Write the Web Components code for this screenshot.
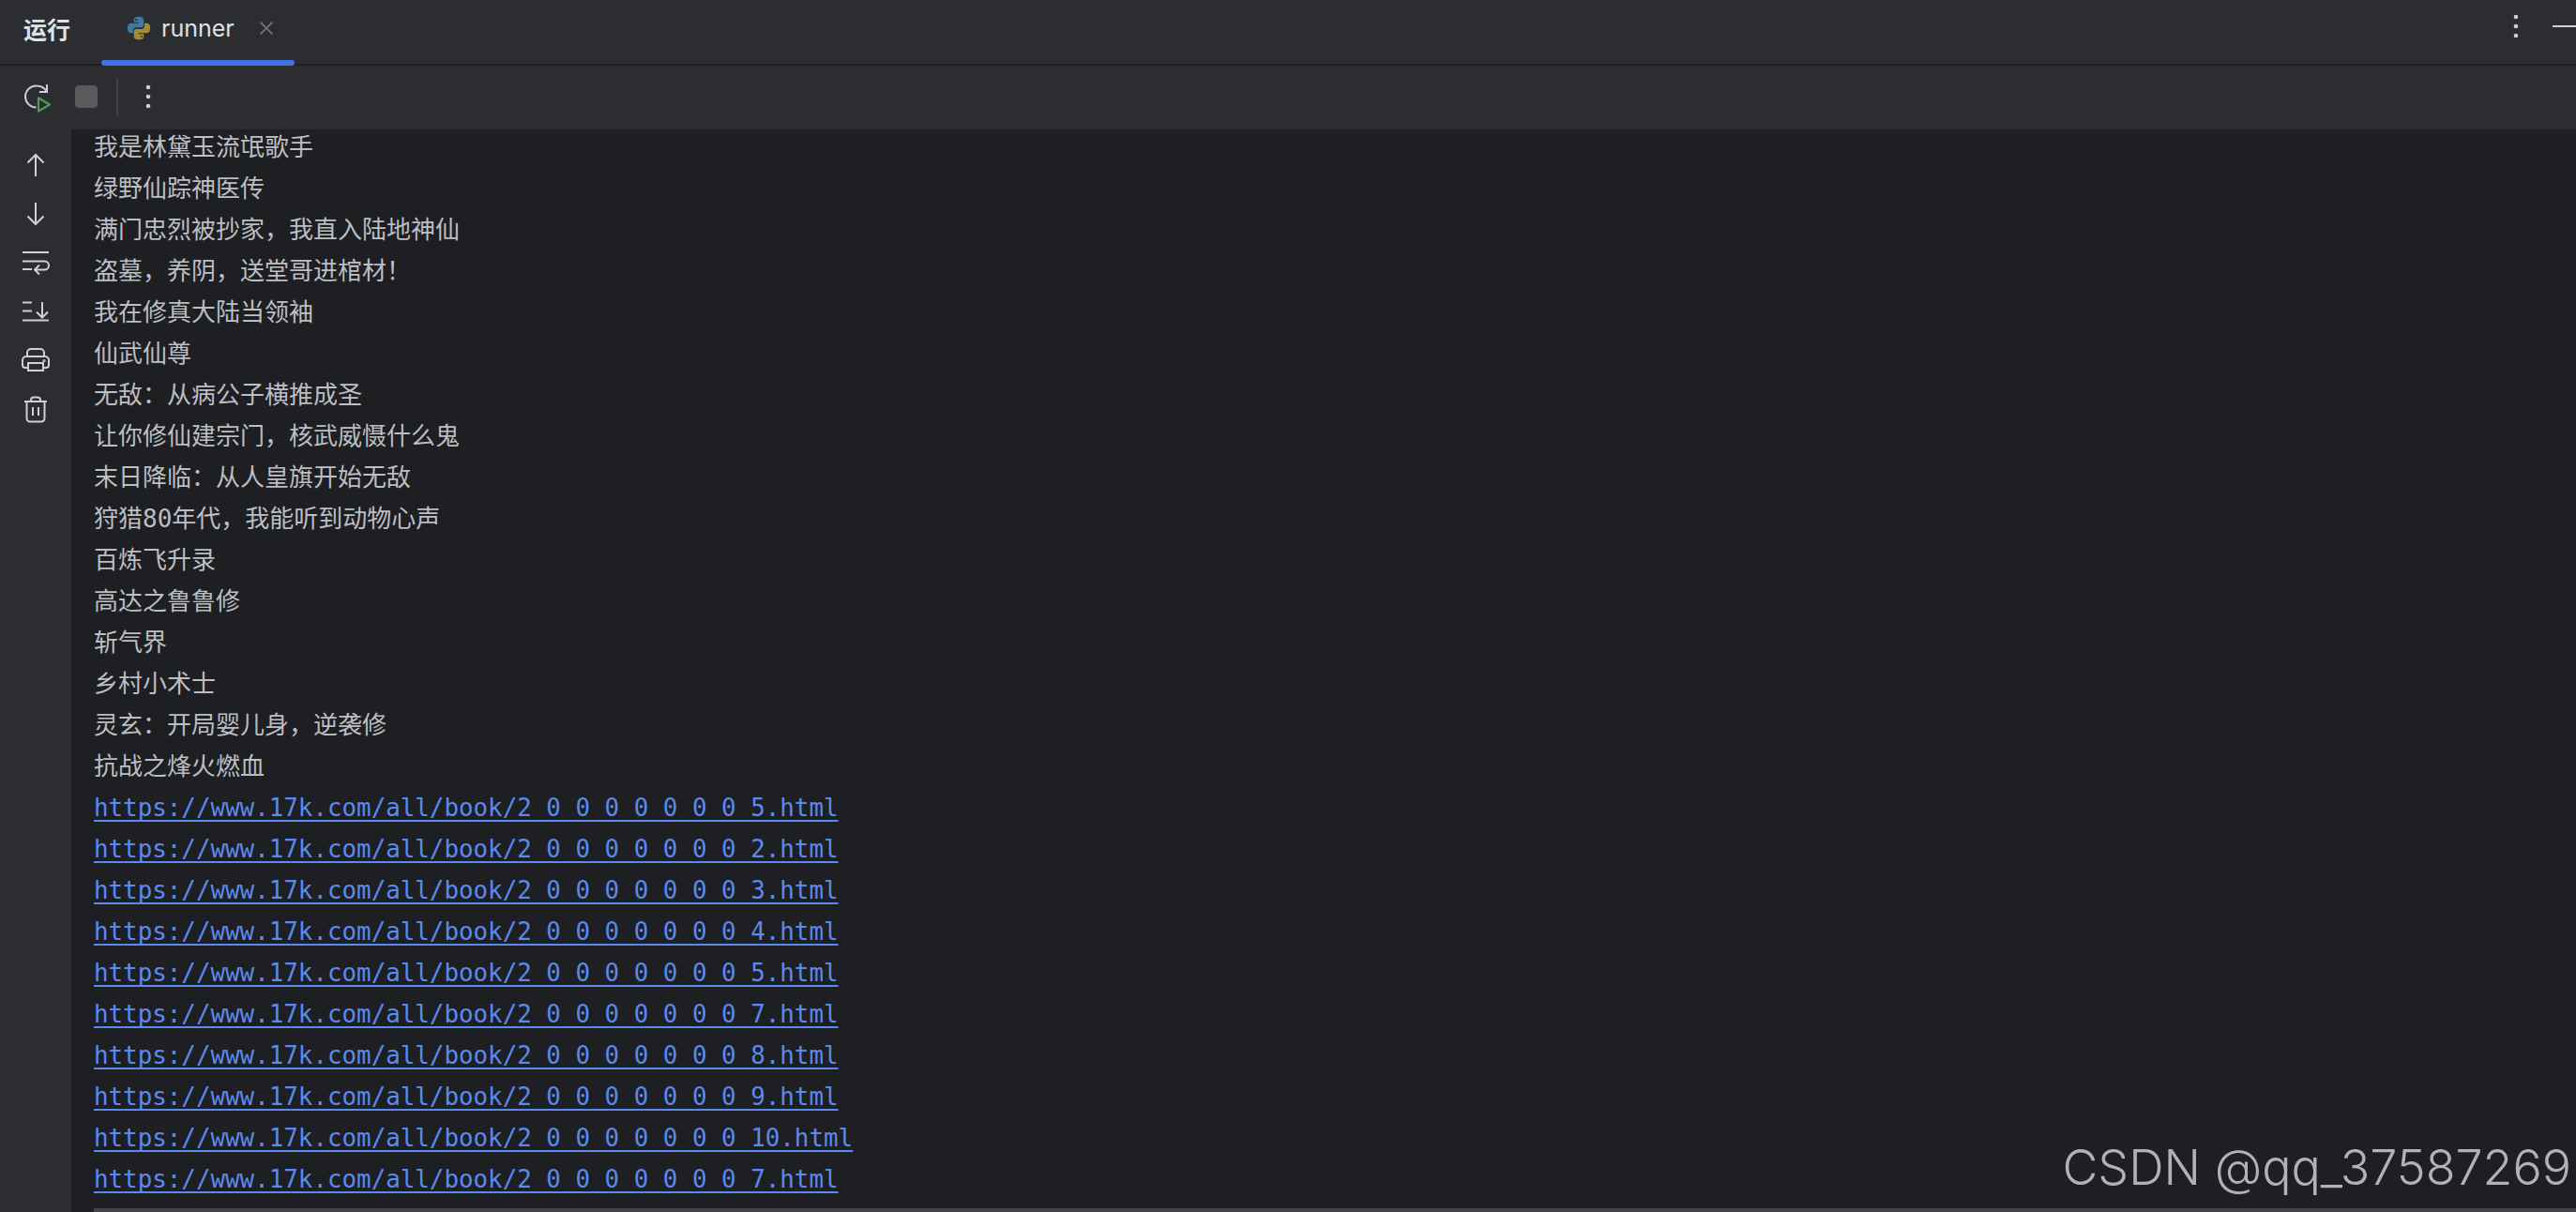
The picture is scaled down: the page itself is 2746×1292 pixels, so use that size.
<!DOCTYPE html>
<html lang="zh">
<head>
<meta charset="utf-8">
<title>runner</title>
<style>
  html, body { margin: 0; padding: 0; height: 100%; background: #1e1f22; overflow: hidden; }
  body { display: flex; flex-direction: column; height: 1292px; }
</style>
</head>
<body>
<run-tabbar title-text="运行" tab="runner"></run-tabbar>
<run-toolbar></run-toolbar>
<run-panel>
  <run-sidebar slot="side"></run-sidebar>
  <console-view slot="main">
    <console-line>我是林黛玉流氓歌手</console-line>
    <console-line>绿野仙踪神医传</console-line>
    <console-line>满门忠烈被抄家，我直入陆地神仙</console-line>
    <console-line>盗墓，养阴，送堂哥进棺材！</console-line>
    <console-line>我在修真大陆当领袖</console-line>
    <console-line>仙武仙尊</console-line>
    <console-line>无敌：从病公子横推成圣</console-line>
    <console-line>让你修仙建宗门，核武威慑什么鬼</console-line>
    <console-line>末日降临：从人皇旗开始无敌</console-line>
    <console-line>狩猎80年代，我能听到动物心声</console-line>
    <console-line>百炼飞升录</console-line>
    <console-line>高达之鲁鲁修</console-line>
    <console-line>斩气界</console-line>
    <console-line>乡村小术士</console-line>
    <console-line>灵玄：开局婴儿身，逆袭修</console-line>
    <console-line>抗战之烽火燃血</console-line>
    <console-line link>https://www.17k.com/all/book/2_0_0_0_0_0_0_0_5.html</console-line>
    <console-line link>https://www.17k.com/all/book/2_0_0_0_0_0_0_0_2.html</console-line>
    <console-line link>https://www.17k.com/all/book/2_0_0_0_0_0_0_0_3.html</console-line>
    <console-line link>https://www.17k.com/all/book/2_0_0_0_0_0_0_0_4.html</console-line>
    <console-line link>https://www.17k.com/all/book/2_0_0_0_0_0_0_0_5.html</console-line>
    <console-line link>https://www.17k.com/all/book/2_0_0_0_0_0_0_0_7.html</console-line>
    <console-line link>https://www.17k.com/all/book/2_0_0_0_0_0_0_0_8.html</console-line>
    <console-line link>https://www.17k.com/all/book/2_0_0_0_0_0_0_0_9.html</console-line>
    <console-line link>https://www.17k.com/all/book/2_0_0_0_0_0_0_0_10.html</console-line>
    <console-line link>https://www.17k.com/all/book/2_0_0_0_0_0_0_0_7.html</console-line>
  </console-view>
</run-panel>

<script>
/* ---------- top bar with the title, the runner tab and the window actions ---------- */
class RunTabbar extends HTMLElement {
  constructor() {
    super();
    const root = this.attachShadow({ mode: 'open' });
    root.innerHTML = `
      <style>
        :host { display: flex; align-items: stretch; height: 68px; flex: none; background: #2b2d30;
                border-bottom: 2px solid #1e1f22; color: #dfe1e5; font-family: Inter, "Noto Sans CJK SC", sans-serif; }
        .title { width: 83px; padding-left: 25px; font-size: 25px; font-weight: 700; line-height: 60px; font-family: "Noto Sans CJK SC", sans-serif; }
        .tab { position: relative; width: 206px; display: flex; align-items: center; height: 60px; box-sizing: border-box; padding-left: 26px; }
        .tab::after { content: ""; position: absolute; left: 0; right: 0; top: 64px; height: 6px; border-radius: 3px; background: #3f72e3; }
        .name { font-size: 25px; margin-left: 10px; width: 105px; }
        svg { display: block; flex: none; }
        .actions { margin-left: auto; display: flex; align-items: center; height: 56px; }
        .minus { width: 25px; height: 2px; margin-left: 36px; background: #ced0d6; }
      </style>
      <div class="title">${this.getAttribute('title-text')}</div>
      <div class="tab">
        <svg width="28" height="28" viewBox="0 0 16 16">
          <path fill="#3f7aa3" d="M8 1C5.200 1 5 2.200 5 3v1.400h3.200V5H3.400C2 5 1 6 1 8c0 2 1 3 2.300 3h1.200V9.400C4.500 8 5.500 7.500 6.500 7.500h3c1 0 1.500-.7 1.500-1.500V3c0-1.200-1-2-3-2z"/>
          <path fill="#a48b3a" d="M8 15c2.800 0 3-1.200 3-2v-1.400H7.800V11h4.800c1.400 0 2.400-1 2.400-3 0-2-1-3-2.300-3h-1.200v1.600c0 1.400-1 1.900-2 1.900h-3c-1 0-1.500.7-1.500 1.500v3c0 1.200 1 2 3 2z"/>
          <circle cx="6.400" cy="2.900" r=".6" fill="#2b2d30"/>
          <circle cx="9.600" cy="13.100" r=".6" fill="#2b2d30"/>
        </svg>
        <span class="name">${this.getAttribute('tab')}</span>
        <svg width="14" height="14" viewBox="0 0 14 14" stroke="#6f737a" stroke-width="1.800"><path d="M0.500 0.500l13 13M13.500 0.500l-13 13"/></svg>
      </div>
      <div class="actions">
        <svg width="6" height="26" viewBox="0 0 6 26" fill="#ced0d6"><circle cx="3" cy="3" r="2.300"/><circle cx="3" cy="13" r="2.300"/><circle cx="3" cy="23" r="2.300"/></svg>
        <div class="minus"></div>
      </div>`;
  }
}
customElements.define('run-tabbar', RunTabbar);

/* ---------- rerun / stop / more ---------- */
class RunToolbar extends HTMLElement {
  constructor() {
    super();
    const root = this.attachShadow({ mode: 'open' });
    root.innerHTML = `
      <style>
        :host { display: flex; align-items: center; height: 68px; flex: none; background: #2b2d30; padding-left: 24px; }
        svg { display: block; flex: none; }
        .stop { width: 24px; height: 24px; border-radius: 4px; background: #5a5b5d; margin-left: 24px; margin-top: -2px; }
        .sep { width: 2px; height: 40px; background: #3f4144; margin-left: 20px; margin-top: -2px; }
        .more { margin-left: 29px; margin-top: -2px; }
      </style>
      <svg width="32" height="32" viewBox="0 0 32 32" fill="none" style="margin-top:2px">
        <path stroke="#ced0d6" stroke-width="2" d="M26 9C24 5 20 2.500 14.500 2.500a11.500 11.500 0 0 0 0 23"/>
        <path stroke="#ced0d6" stroke-width="2" d="M26 1v8h-8"/>
        <path stroke="#57965c" stroke-width="2.200" stroke-linejoin="round" d="M17 15.500l12 7-12 7z"/>
      </svg>
      <div class="stop"></div>
      <div class="sep"></div>
      <svg class="more" width="6" height="26" viewBox="0 0 6 26" fill="#ced0d6"><circle cx="3" cy="3" r="2.300"/><circle cx="3" cy="13" r="2.300"/><circle cx="3" cy="23" r="2.300"/></svg>`;
  }
}
customElements.define('run-toolbar', RunToolbar);

/* ---------- body of the tool window: sidebar + console ---------- */
class RunPanel extends HTMLElement {
  constructor() {
    super();
    const root = this.attachShadow({ mode: 'open' });
    root.innerHTML = `
      <style>
        :host { display: flex; flex: 1; min-height: 0; }
      </style>
      <slot name="side"></slot>
      <slot name="main"></slot>`;
  }
}
customElements.define('run-panel', RunPanel);

class RunSidebar extends HTMLElement {
  constructor() {
    super();
    const root = this.attachShadow({ mode: 'open' });
    root.innerHTML = `
      <style>
        :host { display: flex; flex-direction: column; align-items: center; gap: 20px; width: 76px; flex: none;
                box-sizing: border-box; padding-top: 22px; background: #2b2d30; }
        svg { display: block; fill: none; stroke: #ced0d6; stroke-width: 2; }
      </style>
      <svg width="32" height="32" viewBox="0 0 32 32"><path d="M16 28V5M7.500 13.500L16 5l8.500 8.500"/></svg>
      <svg width="32" height="32" viewBox="0 0 32 32"><path d="M16 4v23M7.500 18.500L16 27l8.500-8.500"/></svg>
      <svg width="32" height="32" viewBox="0 0 32 32"><path d="M2 5h28M2 14.500h23.500a4.500 4.500 0 0 1 0 9H16M2 23h10M20 18.500l-5 5 5 5"/></svg>
      <svg width="32" height="32" viewBox="0 0 32 32"><path d="M2 6.500h10M2 15.500h10M2 25.500h28M23 6v16M17 16.500l6 6 6-6"/></svg>
      <svg width="32" height="32" viewBox="0 0 32 32"><path d="M7 12V8a4 4 0 0 1 4-4h10a4 4 0 0 1 4 4v4M7 24H5a3 3 0 0 1-3-3v-5a4 4 0 0 1 4-4h20a4 4 0 0 1 4 4v5a3 3 0 0 1-3 3h-2M8 19h16v8H8z"/><circle cx="25" cy="16.500" r=".6"/></svg>
      <svg width="32" height="32" viewBox="0 0 32 32"><path d="M4 8h24M11 8V6.500A3 3 0 0 1 14 3.500h4a3 3 0 0 1 3 3V8M6.500 8v18a3.500 3.500 0 0 0 3.500 3.500h12a3.500 3.500 0 0 0 3.500-3.500V8M13 14v9M19 14v9"/></svg>`;
  }
}
customElements.define('run-sidebar', RunSidebar);

/* ---------- console output, watermark and overlay scrollbar lie over it ---------- */
class ConsoleView extends HTMLElement {
  constructor() {
    super();
    const root = this.attachShadow({ mode: 'open' });
    root.innerHTML = `
      <style>
        :host { display: block; position: relative; flex: 1; min-width: 0; height: 1154px; overflow: hidden; background: #1e1f22; }
        .lines { padding-left: 24px; margin-top: -3px; }
        .mark { position: absolute; right: 5px; top: 1077px; font: 300 52px/60px Inter, "Liberation Sans", sans-serif; color: #b0b2b4; white-space: nowrap; }
        .bar { position: absolute; left: 24px; right: 0; bottom: 0; height: 4px; background: #434446; }
      </style>
      <div class="lines"><slot></slot></div>
      <div class="mark">CSDN @qq_37587269</div>
      <div class="bar"></div>`;
  }
}
customElements.define('console-view', ConsoleView);

class ConsoleLine extends HTMLElement {
  constructor() {
    super();
    const root = this.attachShadow({ mode: 'open' });
    root.innerHTML = `<style>
        :host { display: block; height: 44px; line-height: 44px; color: #bcbec4;
                font-family: "DejaVu Sans Mono", "Noto Sans CJK SC", monospace; font-size: 26px; }
        :host([link]) { color: #5a8aee; font-size: 25.850px; text-decoration: underline; text-decoration-thickness: 2px;
                        text-underline-offset: 4px; text-decoration-skip-ink: none; }
      </style><slot></slot>`;
  }
}
customElements.define('console-line', ConsoleLine);
</script>
</body>
</html>
